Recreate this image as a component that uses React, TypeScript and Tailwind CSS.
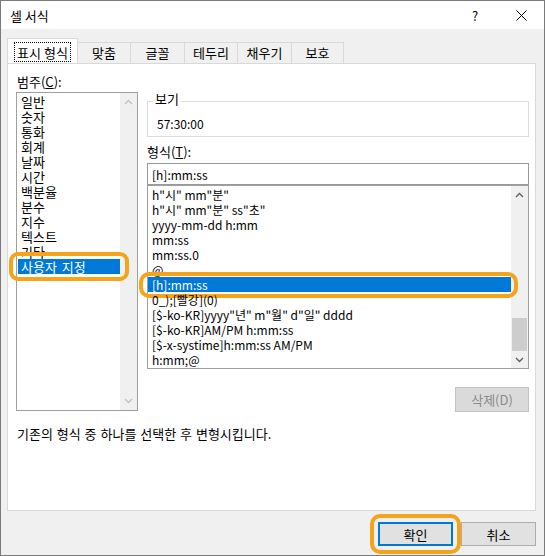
import React from 'react';

const ORANGE = 'border-[#f5a31a]';

const categories = ['일반', '숫자', '통화', '회계', '날짜', '시간', '백분율', '분수', '지수', '텍스트', '기타', '사용자 지정'];

const formats = [
  'h"시" mm"분"',
  'h"시" mm"분" ss"초"',
  'yyyy-mm-dd h:mm',
  'mm:ss',
  'mm:ss.0',
  '@',
  '[h]:mm:ss',
  '0_);[빨강](0)',
  '[$-ko-KR]yyyy"년" m"월" d"일" dddd',
  '[$-ko-KR]AM/PM h:mm:ss',
  '[$-x-systime]h:mm:ss AM/PM',
  'h:mm;@',
];

const tabs = ['맞춤', '글꼴', '테두리', '채우기', '보호'];
const tabWidths = ['w-[53px]', 'w-[54px]', 'w-[53px]', 'w-[54px]', 'w-[52px]'];

const Chevron: React.FC<{ down?: boolean; color: string }> = ({ down, color }) => (
  <svg width="9" height="6" viewBox="0 0 9 6" className="block">
    <polyline
      points={down ? '1,1 4.5,4.5 8,1' : '1,5 4.5,1.5 8,5'}
      fill="none"
      stroke={color}
      strokeWidth="1.4"
    />
  </svg>
);

const App: React.FC = () => {
  return (
    <div
      className="w-[545px] h-[556px] flex flex-col bg-[#f0f0f0] border border-[#7a7a7a] text-[13px] leading-[15px] text-black overflow-hidden"
      style={{ fontFamily: '"Noto Sans CJK KR", "Noto Sans", sans-serif' }}
    >
      {/* title bar */}
      <div className="h-[28px] bg-white flex items-center shrink-0">
        <span className="ml-[9px]">셀 서식</span>
        <div className="ml-auto flex h-full">
          <div className="w-[46px] flex items-center justify-center text-[13px]">?</div>
          <div className="w-[46px] flex items-center justify-center">
            <svg width="11" height="11" viewBox="0 0 11 11">
              <path d="M0.5 0.5 L10.5 10.5 M10.5 0.5 L0.5 10.5" stroke="#000" strokeWidth="1" />
            </svg>
          </div>
        </div>
      </div>

      {/* tabs */}
      <div className="flex items-end ml-[6px] mt-[10px] h-[24px] relative z-10">
        <div className="w-[71px] h-[25px] bg-white border-l border-t border-r border-[#d9d9d9] flex justify-center pt-[3px]">
          <span className="h-[20px] px-[2px] border border-dotted border-black flex items-center">표시 형식</span>
        </div>
        {tabs.map((t, i) => (
          <div
            key={t}
            className={`${tabWidths[i]} h-[21px] border-t border-r border-[#d9d9d9] flex items-center justify-center pb-px`}
          >
            {t}
          </div>
        ))}
      </div>

      {/* panel */}
      <div className="ml-[6px] w-[529px] h-[448px] bg-white border border-[#d9d9d9] flex flex-col shrink-0">
        <div className="flex">
          {/* left column */}
          <div className="ml-[8px] mt-[10px] flex flex-col">
            <div className="ml-px">
              범주(<span className="underline">C</span>):
            </div>
            <div className="mt-[3px] w-[122px] h-[319px] border border-[#a0a0a0] flex">
              <div className="flex-1 pt-px">
                {categories.map((c) => {
                  const sel = c === '사용자 지정';
                  return (
                    <div
                      key={c}
                      className={`relative h-[15px] ml-px pl-[3px] whitespace-nowrap ${sel ? 'bg-[#0078d7] text-white [word-spacing:2px]' : ''}`}
                    >
                      {c}
                      {sel && (
                        <span className={`absolute left-[-9px] right-[-9px] top-[-7px] bottom-[-7px] border-[4px] ${ORANGE} rounded-[9px]`} />
                      )}
                    </div>
                  );
                })}
              </div>
              <div className="w-[17px] bg-[#f0f0f0] flex flex-col justify-between items-center py-[6px]">
                <Chevron color="#c2c2c2" />
                <Chevron down color="#c2c2c2" />
              </div>
            </div>
          </div>

          {/* right column */}
          <div className="ml-[9px] mt-[27px] w-[382px] flex flex-col">
            <fieldset className="border border-[#dcdcdc] px-[9px]">
              <legend className="ml-[-4px] px-[2px] pb-[6px] leading-[15px]">보기</legend>
              <div className="pt-[4px] pb-[5px] text-[12px]">57:30:00</div>
            </fieldset>

            <div className="mt-[7px]">
              형식(<span className="underline">T</span>):
            </div>
            <div className="mt-[4px] h-[22px] border border-[#999999] pl-[4px] flex items-center text-[12px]">[h]:mm:ss</div>
            <div className="h-[184px] border border-[#a0a0a0] flex text-[12px]">
              <div className="flex-1 pt-px">
                {formats.map((f) => {
                  const sel = f === '[h]:mm:ss';
                  return (
                    <div
                      key={f}
                      className={`relative z-10 h-[15px] pl-[4px] whitespace-nowrap ${sel ? 'bg-[#0078d7] text-white' : ''}`}
                    >
                      {f}
                      {sel && (
                        <span className={`absolute left-[-9px] right-[-7px] top-[-5px] bottom-[-6px] border-[4px] ${ORANGE} rounded-[10px]`} />
                      )}
                    </div>
                  );
                })}
              </div>
              <div className="w-[17px] bg-[#f0f0f0] flex flex-col">
                <div className="h-[17px] flex items-center justify-center">
                  <Chevron color="#606060" />
                </div>
                <div className="flex-1" />
                <div className="h-[33px] mx-[1px] bg-[#cdcdcd]" />
                <div className="h-[17px] flex items-center justify-center">
                  <Chevron down color="#606060" />
                </div>
              </div>
            </div>
            <div className="self-end mt-[18px] w-[74px] h-[25px] bg-[#dadada] border border-[#c4c4c4] text-[#8a8a8a] flex items-center justify-center">
              삭제(D)
            </div>
          </div>
        </div>

        <div className="ml-[9px] mt-[14px] [word-spacing:1px]">기존의 형식 중 하나를 선택한 후 변형시킵니다.</div>
      </div>

      {/* buttons */}
      <div className="flex justify-end gap-[8px] mr-[8px] mt-[11px]">
        <div className="relative w-[75px] h-[24px] bg-[#e1e1e1] border-2 border-[#0078d7] flex items-center justify-center">
          확인
          <span className={`absolute left-[-10px] right-[-10px] top-[-10px] bottom-[-10px] border-[4px] ${ORANGE} rounded-[10px]`} />
        </div>
        <div className="w-[75px] h-[24px] bg-[#e1e1e1] border border-[#adadad] flex items-center justify-center">
          취소
        </div>
      </div>
    </div>
  );
};

export default App;
